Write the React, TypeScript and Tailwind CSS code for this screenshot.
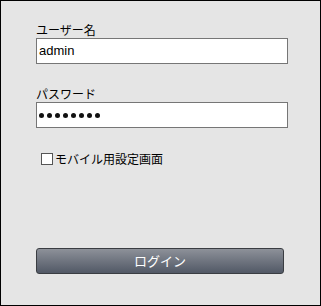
import React from "react";

export default function App() {
  const font = { fontFamily: '"Noto Sans CJK JP", "Liberation Sans", sans-serif' };
  return (
    <div
      className="w-[321px] h-[306px] box-border border border-black bg-[#e5e5e5] pl-[35px] pt-[21px] text-black"
      style={font}
    >
      <div className="text-[12px] leading-[16px]">ユーザー名</div>
      <div className="w-[252px] h-[26px] box-border border border-[#767676] bg-white flex items-center pl-[2px] text-[13px] font-['Liberation_Sans',sans-serif]">
        admin
      </div>

      <div className="mt-[22px] text-[12px] leading-[16px]">パスワード</div>
      <div className="w-[252px] h-[26px] box-border border border-[#767676] bg-white flex items-center pl-[2px] gap-[3px]">
        {[0, 1, 2, 3, 4, 5, 6, 7].map((i) => (
          <span key={i} className="block w-[5px] h-[5px] rounded-full bg-[#111]" />
        ))}
      </div>

      <label className="mt-[23px] flex items-center h-[16px] text-[12px] leading-[16px]">
        <span className="ml-[5px] block w-[12px] h-[12px] box-border border border-[#555] bg-white" />
        <span className="ml-[2px]">モバイル用設定画面</span>
      </label>

      <button
        className="mt-[81px] w-[248px] h-[26px] box-border border border-[#3a3d42] rounded-[3px] bg-gradient-to-b from-[#8d9199] to-[#525966] text-white text-[13px] leading-[16px] flex items-center justify-center"
        style={font}
      >
        ログイン
      </button>
    </div>
  );
}
